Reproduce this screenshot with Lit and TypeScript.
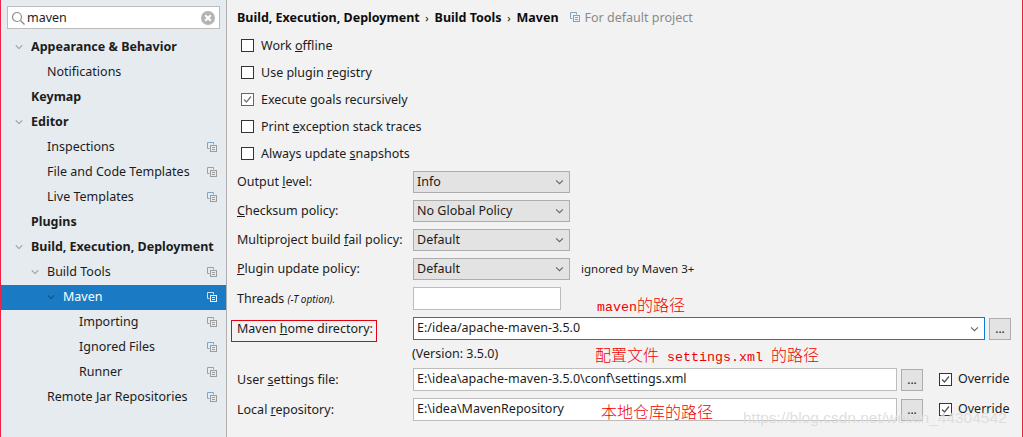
import { LitElement, html, css, svg } from "lit";
import { customElement } from "lit/decorators.js";

const copyIcon = (sel = false) => html`<svg class="copy" width="10" height="10" viewBox="0 0 10 10">
  <path d="M2.5 6.5h-2v-6h6v2" fill="none" stroke=${sel ? "#cfe0ee" : "#7fa6c6"} stroke-width="1"/>
  <rect x="3.5" y="3.5" width="6" height="6" fill=${sel ? "#1a7bc4" : "none"} stroke=${sel ? "#f0f0f0" : "#9c9c9c"} stroke-width="1"/>
  <path d="M5 5.5h3M5 7.5h3" stroke=${sel ? "#f0f0f0" : "#9c9c9c"} stroke-width="1"/>
</svg>`;

const chevron = svg`<path d="M1 1.5l4 4 4-4" fill="none" stroke-width="1.3"/>`;

type Item = { t: string; lvl: number; bold?: boolean; arrow?: boolean; copy?: boolean; sel?: boolean };
const items: Item[] = [
  { t: "Appearance & Behavior", lvl: 0, bold: true, arrow: true },
  { t: "Notifications", lvl: 1 },
  { t: "Keymap", lvl: 0, bold: true },
  { t: "Editor", lvl: 0, bold: true, arrow: true },
  { t: "Inspections", lvl: 1, copy: true },
  { t: "File and Code Templates", lvl: 1, copy: true },
  { t: "Live Templates", lvl: 1, copy: true },
  { t: "Plugins", lvl: 0, bold: true },
  { t: "Build, Execution, Deployment", lvl: 0, bold: true, arrow: true },
  { t: "Build Tools", lvl: 1, arrow: true, copy: true },
  { t: "Maven", lvl: 2, arrow: true, copy: true, sel: true },
  { t: "Importing", lvl: 3, copy: true },
  { t: "Ignored Files", lvl: 3, copy: true },
  { t: "Runner", lvl: 3, copy: true },
  { t: "Remote Jar Repositories", lvl: 1, copy: true },
];

const indent = [31, 47, 63, 79];

@customElement("app-root")
export class AppRoot extends LitElement {
  static styles = css`
    :host {
      display: block;
      width: 1023px;
      height: 437px;
      overflow: hidden;
      font-family: "Noto Sans", "Open Sans", sans-serif;
      font-size: 12.5px;
      color: #1c1c1c;
    }
    .root {
      position: relative;
      display: flex;
      width: 1023px;
      height: 437px;
      box-sizing: border-box;
      border-left: 1px solid #ee2244;
      border-right: 1px solid #ee2244;
      background: #f2f2f2;
    }
    .side {
      width: 226px;
      flex: none;
      box-sizing: border-box;
      background: #e6ebf0;
      border-right: 1px solid #b0b0b0;
      padding-top: 6px;
    }
    .search {
      display: flex;
      align-items: center;
      box-sizing: border-box;
      height: 23px;
      width: 213px;
      margin-left: 6px;
      margin-bottom: 6px;
      background: #fff;
      border: 1px solid #bcbcbc;
      padding: 0 4px 0 3px;
      gap: 2px;
    }
    .search span { flex: 1; padding-bottom: 1px; }
    .row {
      display: flex;
      align-items: center;
      box-sizing: border-box;
      height: 25px;
      padding-bottom: 2px;
    }
    .row.sel { background: #1a7bc4; color: #fff; }
    .row.bold { font-weight: 700; }
    .row .label { flex: 1; white-space: nowrap; }
    .arrow {
      width: 8px;
      height: 6px;
      flex: none;
      margin-right: 8px;
      stroke: #979ca1;
    }
    .row.sel .arrow { stroke: #0f4f80; }
    .row .copy { flex: none; margin-right: 9px; }

    .main { flex: 1; padding: 6px 0 0 10px; min-width: 0; }
    .crumbs {
      display: flex;
      align-items: center;
      box-sizing: border-box;
      height: 23px;
      padding-bottom: 1px;
      font-weight: 700;
      color: #0d0d0d;
      white-space: nowrap;
    }
    .crumbs .sep { font-weight: 400; font-size: 11px; margin: 0 6px 0 5.5px; }
    .crumbs .def {
      display: flex;
      align-items: center;
      gap: 5px;
      margin-left: 11px;
      font-weight: 400;
      color: #8a8a8a;
    }
    .checks { display: flex; flex-direction: column; padding: 3px 0 0 4px; height: 142px; box-sizing: border-box; }
    .check { display: flex; align-items: center; height: 27px; gap: 7px; white-space: nowrap; }
    .box {
      width: 13px;
      height: 13px;
      box-sizing: border-box;
      flex: none;
      background: #fff;
      border: 1px solid #333;
      display: block;
    }
    .box.on { border-color: #666; }
    .form { display: flex; flex-direction: column; }
    .frow { display: flex; align-items: center; white-space: nowrap; position: relative; }
    .frow .lbl { width: 176px; flex: none; }
    .short { height: 23px; }
    .gap7 { margin-bottom: 7px; }
    .combo {
      width: 157px;
      height: 22px;
      box-sizing: border-box;
      display: flex;
      align-items: center;
      justify-content: space-between;
      padding: 0 5px 2px 3px;
      background: #e3e3e3;
      border: 1px solid #adadad;
    }
    .combo svg { stroke: #666; margin-top: 2px; }
    .field {
      box-sizing: border-box;
      height: 23px;
      display: flex;
      align-items: center;
      padding: 0 3px 2px;
      background: #fff;
      border: 1px solid #bcbcbc;
    }
    .field.focus { border-color: #0a7bd2; justify-content: space-between; padding-right: 5px; width: 572px; }
    .field.focus svg { stroke: #666; margin-top: 2px; }
    .field.threads { width: 148px; }
    .field.path { width: 484px; }
    .dots {
      box-sizing: border-box;
      width: 22px;
      height: 22px;
      margin-left: 4px;
      background: #e3e3e3;
      border: 1px solid #adadad;
      display: flex;
      align-items: center;
      justify-content: center;
      font-size: 12px;
      line-height: 22px;
    }
    .note { margin-left: 11px; font-size: 11.5px; line-height: 21px; }
    .hint { font-style: italic; font-size: 10px; }
    .override { display: flex; align-items: center; gap: 6px; margin-left: 16px; }
    .override span { padding-bottom: 2px; }
    .version { height: 28px; display: flex; align-items: center; padding: 0 0 2px 175px; box-sizing: border-box; }
    .r29 { height: 29px; align-items: flex-start; }
    .r29 .lbl { line-height: 22px; }
    .threadrow { height: 30px; }
    .threadrow .lbl { line-height: 24px; }
    .rboxed {
      position: absolute;
      left: -6px;
      top: 3px;
      width: 146px;
      height: 22px;
      box-sizing: border-box;
      border: 1px solid #e8000e;
    }
    .ann {
      position: absolute;
      color: #f00000;
      font-family: "Noto Sans CJK SC", sans-serif;
      font-weight: 300;
      font-size: 16px;
      line-height: 20px;
      white-space: pre;
    }
    .ann i { font-family: "Liberation Mono", monospace; font-style: normal; font-weight: 400; font-size: 13.33px; }
    .a1 { left: 596px; top: 294px; }
    .a2 { left: 594px; top: 344px; }
    .a3 { left: 600px; top: 401px; }
    .watermark {
      position: absolute;
      left: 742px;
      top: 408px;
      font-family: "Liberation Sans", sans-serif;
      font-size: 15.5px;
      line-height: 20px;
      white-space: nowrap;
      color: rgba(190, 190, 190, 0.5);
      text-shadow: 0 0 1px rgba(255, 255, 255, 0.8);
    }
  `;

  private combo(v: string) {
    return html`<div class="combo"><span>${v}</span><svg width="9" height="6" viewBox="0 0 10 7">${chevron}</svg></div>`;
  }

  private override() {
    return html`<div class="override"><svg class="box" viewBox="0 0 11 11"><path d="M2 5.5l2.5 2.5 4.5-5.5" fill="none" stroke="#555" stroke-width="1.3"/></svg><span>Override</span></div>`;
  }

  render() {
    return html`<div class="root">
      <aside class="side">
        <div class="search">
          <svg width="14" height="14" viewBox="0 0 14 14"><circle cx="6" cy="6" r="4.5" fill="none" stroke="#8a8a8a" stroke-width="1.2"/><path d="M9.5 9.5l4 4" stroke="#8a8a8a" stroke-width="1.3"/></svg>
          <span>maven</span>
          <svg width="14" height="14" viewBox="0 0 14 14"><circle cx="7" cy="7" r="7" fill="#b4b4b4"/><path d="M4.2 4.2l5.6 5.6M9.8 4.2l-5.6 5.6" stroke="#fff" stroke-width="2"/></svg>
        </div>
        ${items.map(
          (i) => html`<div class="row ${i.bold ? "bold" : ""} ${i.sel ? "sel" : ""}" style="padding-left:${indent[i.lvl] - 1 - (i.arrow ? 16 : 0)}px">
            ${i.arrow ? html`<svg class="arrow" viewBox="0 0 10 7">${chevron}</svg>` : ""}
            <span class="label">${i.t}</span>
            ${i.copy ? copyIcon(i.sel) : ""}
          </div>`
        )}
      </aside>
      <main class="main">
        <div class="crumbs">
          Build, Execution, Deployment<span class="sep">›</span>Build Tools<span class="sep">›</span>Maven
          <span class="def">${copyIcon()}For default project</span>
        </div>
        <div class="checks">
          <div class="check"><span class="box"></span><span>Work <u>o</u>ffline</span></div>
          <div class="check"><span class="box"></span><span>Use plugin <u>r</u>egistry</span></div>
          <div class="check">
            <svg class="box on" viewBox="0 0 11 11"><path d="M2 5.5l2.5 2.5 4.5-5.5" fill="none" stroke="#777" stroke-width="1.3"/></svg>
            <span>Execute <u>g</u>oals recursively</span>
          </div>
          <div class="check"><span class="box"></span><span>Print <u>e</u>xception stack traces</span></div>
          <div class="check"><span class="box"></span><span>Always update <u>s</u>napshots</span></div>
        </div>
        <div class="form">
          <div class="frow r29"><span class="lbl">Output <u>l</u>evel:</span>${this.combo("Info")}</div>
          <div class="frow r29"><span class="lbl"><u>C</u>hecksum policy:</span>${this.combo("No Global Policy")}</div>
          <div class="frow r29"><span class="lbl">Multiproject build <u>f</u>ail policy:</span>${this.combo("Default")}</div>
          <div class="frow r29"><span class="lbl"><u>P</u>lugin update policy:</span>${this.combo("Default")}<span class="note">ignored by Maven 3+</span></div>
          <div class="frow r29 threadrow"><span class="lbl">Threads <span class="hint">(-T option).</span></span><div class="field threads"></div></div>
          <div class="frow short">
            <span class="lbl">Maven <u>h</u>ome directory:</span>
            <span class="rboxed"></span>
            <div class="field focus"><span>E:/idea/apache-maven-3.5.0</span><svg width="9" height="6" viewBox="0 0 10 7">${chevron}</svg></div>
            <div class="dots">...</div>
          </div>
          <div class="version">(Version: 3.5.0)</div>
          <div class="frow short gap7">
            <span class="lbl">User <u>s</u>ettings file:</span>
            <div class="field path">E:\\idea\\apache-maven-3.5.0\\conf\\settings.xml</div>
            <div class="dots">...</div>
            ${this.override()}
          </div>
          <div class="frow short">
            <span class="lbl">Local <u>r</u>epository:</span>
            <div class="field path">E:\\idea\\MavenRepository</div>
            <div class="dots">...</div>
            ${this.override()}
          </div>
        </div>
      </main>
      <span class="ann a1"><i>maven</i>的路径</span>
      <span class="ann a2">配置文件<i> settings.xml </i>的路径</span>
      <span class="ann a3">本地仓库的路径</span>
      <span class="watermark">https://blog.csdn.net/weixin_44304542</span>
    </div>`;
  }
}
